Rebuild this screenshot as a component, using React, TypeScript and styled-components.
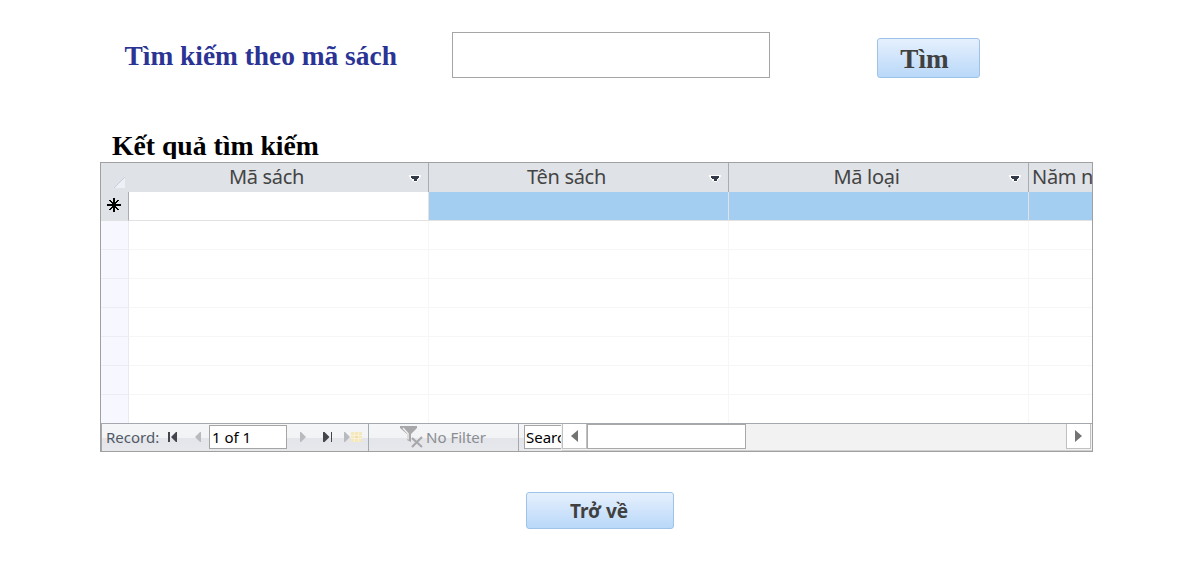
import React from "react";
import styled, { createGlobalStyle } from "styled-components";

const GlobalStyle = createGlobalStyle`
  *, *::before, *::after { box-sizing: border-box; }
  body { margin: 0; background: #fff; overflow: hidden; }
  input, button { margin: 0; padding: 0; border-radius: 0; outline: none; }
`;

const Page = styled.main`
  width: 1195px;
  height: 568px;
  padding: 32px 102px 0 100px;
  display: flex;
  flex-direction: column;
  background: #fff;
  font-family: "Noto Sans", "Open Sans", sans-serif;
`;

const SearchBar = styled.form`
  display: flex;
  align-items: flex-start;
  height: 95px;
`;

const SearchLabel = styled.label`
  width: 352px;
  padding: 8px 0 0 24.5px;
  font: bold 27.4px/32px "Liberation Serif", serif;
  color: #2b3494;
  white-space: nowrap;
`;

const SearchInput = styled.input`
  width: 318px;
  height: 46px;
  border: 1px solid #a5a5a5;
  background: #fff;
`;

const FormButton = styled.button<{ $width: number; $height: number }>`
  width: ${(p) => p.$width}px;
  height: ${(p) => p.$height}px;
  border: 1px solid #9dc3e9;
  border-radius: 3px;
  background: linear-gradient(#e6f0fd, #b9d8f9);
  color: #404040;
  white-space: nowrap;
`;

const FindButton = styled(FormButton)`
  margin: 6px 0 0 107px;
  padding: 2px 8px 0 0;
  font: bold 27.2px/34px "Liberation Serif", serif;
`;

const BackButton = styled(FormButton)`
  align-self: center;
  margin: 40px 0 0 7px;
  padding-right: 2px;
  font: bold 19px/34px "Noto Sans", sans-serif;
`;

const ResultTitle = styled.h2`
  margin: 0 0 3px;
  padding: 3px 0 0 12px;
  height: 32px;
  overflow: hidden;
  font: bold 27.7px/32px "Liberation Serif", serif;
  color: #000;
`;

const Datasheet = styled.section`
  width: 993px;
  height: 290px;
  border: 1px solid #a0a0a0;
  overflow: hidden;
`;

const GridRow = styled.div`
  display: grid;
  grid-template-columns: 28px 300px 300px 300px 64px;
  height: 29px;
`;

const HeaderRow = styled(GridRow)`
  background: #dfe2e7;
`;

const Corner = styled.div`
  display: flex;
  align-items: flex-end;
  justify-content: flex-end;
  padding: 0 4px 4px 0;
`;

const HeaderCell = styled.div<{ $last?: boolean }>`
  display: flex;
  align-items: center;
  border-right: ${(p) => (p.$last ? "0" : "1px solid #a9adb3")};
  padding: ${(p) => (p.$last ? "0 0 0 3px" : "0 6px 0 0")};
  overflow: hidden;
  font-size: 20px;
  line-height: 28px;
  letter-spacing: -0.3px;
  color: #444;
  white-space: nowrap;
`;

const HeaderText = styled.span`
  flex: 1;
  padding: 0 5px 1px 0;
  text-align: center;
`;

const LastHeaderText = styled.span`
  padding-bottom: 1px;
`;

const RowSelector = styled.div<{ $active?: boolean }>`
  display: flex;
  align-items: center;
  justify-content: center;
  padding: 0 1px 2px 0;
  border-right: 1px solid ${(p) => (p.$active ? "#a9adb3" : "#e9e9ee")};
  border-bottom: 1px solid ${(p) => (p.$active ? "#e2e2e2" : "#ececf3")};
  background: ${(p) => (p.$active ? "#dfe2e7" : "#f6f7ff")};
`;

const Cell = styled.div<{ $active?: boolean; $selected?: boolean }>`
  border-right: 1px solid ${(p) => (p.$active ? "#e2e2e2" : "#f6f6f6")};
  border-bottom: 1px solid ${(p) => (p.$active ? "#e2e2e2" : "#f6f6f6")};
  background: ${(p) => (p.$selected ? "#a4cef1" : "#fff")};
`;

const GridBody = styled.div`
  height: 231px;
  overflow: hidden;
`;

const Footer = styled.footer`
  display: flex;
  height: 28px;
  border-top: 1px solid #a5a8ae;
  border-left: 1px solid #a5a8ae;
  background: linear-gradient(#f5f6f8 0, #f1f3f5 14px, #e4e5ea 14px, #e7e8ec 100%);
  font-size: 15px;
  line-height: 26px;
  color: #505a66;
  white-space: nowrap;
`;

const RecordNav = styled.div`
  display: flex;
  align-items: center;
  width: 267px;
  padding-left: 4px;
  border-right: 1px solid #a5a8ae;
`;

const RecordLabel = styled.span`
  width: 61px;
  padding-bottom: 2px;
`;

const NavIcon = styled.svg<{ $width: number }>`
  display: block;
  flex: none;
  width: ${(p) => p.$width}px;
  height: 27px;
`;

const FooterInput = styled.input<{ $width: number; $open?: boolean }>`
  width: ${(p) => p.$width}px;
  height: 24px;
  margin-bottom: 1px;
  padding: 0 0 1px ${(p) => (p.$open ? 1 : 2)}px;
  border: 1px solid #a5a5a5;
  border-right-width: ${(p) => (p.$open ? 0 : 1)}px;
  background: #fff;
  color: #000;
  font: 15px/20px "Noto Sans", sans-serif;
`;

const FilterState = styled.div`
  display: flex;
  align-items: center;
  width: 150px;
  padding-left: 31px;
  border-right: 1px solid #a5a8ae;
  color: #8b8d90;
`;

const FilterText = styled.span`
  padding-bottom: 2px;
`;

const SearchSlot = styled.div`
  display: flex;
  align-items: center;
  width: 43px;
  padding-left: 5px;
`;

const ScrollBar = styled.div`
  display: flex;
  flex: 1;
  height: 27px;
  padding-right: 1px;
  border-bottom: 1px solid #d0d0d0;
  background: #f2f2f2;
`;

const ScrollArrow = styled.div`
  display: flex;
  align-items: center;
  justify-content: center;
  width: 25px;
  height: 25px;
  border: 1px solid #c1c1c1;
  border-top: 0;
  background: #fff;
`;

const ScrollTrack = styled.div`
  flex: 1;
`;

const ScrollThumb = styled.div`
  width: 159px;
  height: 25px;
  border: 1px solid #a8a8a8;
  background: #fff;
`;

const DropArrow = () => (
  <svg width="13" height="9" viewBox="0 -2 13 9" shapeRendering="crispEdges">
    <path d="M0 0H12V2H11V4H9V6H8V7H5V6H3V4H1V2H0Z" fill="#fff" />
    <path d="M2 1H10V3H9V4H8V6H5V4H3V3H2Z" fill="#333b49" />
  </svg>
);

const columns = ["Mã sách", "Tên sách", "Mã loại"];
const emptyRows = 7;

const SearchForm = () => (
  <SearchBar onSubmit={(e) => e.preventDefault()}>
    <SearchLabel htmlFor="book-code">Tìm kiếm theo mã sách</SearchLabel>
    <SearchInput id="book-code" />
    <FindButton $width={103} $height={40}>Tìm</FindButton>
  </SearchBar>
);

const RecordBar = () => (
  <Footer>
    <RecordNav>
      <RecordLabel>Record:</RecordLabel>
      <NavIcon $width={42} viewBox="0 0 42 27" fill="#45464d">
        <path d="M1 8h2v10H1zM4 13l5-5h1v10h-1z" />
        <path d="M28 13l5-5h1v10h-1z" fill="#b8babe" />
      </NavIcon>
      <FooterInput $width={78} aria-label="Current record" defaultValue="1 of 1" />
      <NavIcon $width={81} viewBox="0 0 81 27">
        <path d="M13 8h1l5 5-5 5h-1z" fill="#b8babe" />
        <path d="M36 8h1.500l5 5-5 5H36zM44 8h1v10h-1z" fill="#45464d" />
        <path d="M57 8h1l5 5-5 5h-1z" fill="#b8babe" />
        <path d="M64 8h11v10H64z" fill="#f4e8bd" />
        <path d="M64 11.500h11M64 14.500h11M67.500 8v10M71.500 8v10" stroke="#f8f1d8" />
        <path d="M68 12h3v2h-3z" fill="#eee0aa" />
      </NavIcon>
    </RecordNav>
    <FilterState>
      <NavIcon $width={26} viewBox="0 0 26 27">
        <path d="M0 2h17v2l-6 6v8l-4-2v-6L0 4z" fill="#a8a8aa" />
        <path d="M3 4l5 5.500v6" stroke="#eee" strokeWidth="1.500" fill="none" />
        <path d="M12 14l10 9M22 13l-10 10" stroke="#a8a8aa" strokeWidth="2.200" fill="none" />
      </NavIcon>
      <FilterText>No Filter</FilterText>
    </FilterState>
    <SearchSlot>
      <FooterInput $width={37} $open aria-label="Search records" defaultValue="Search" />
    </SearchSlot>
    <ScrollBar>
      <ScrollArrow>
        <svg width="7" height="12"><path d="M7 0v12L0 6z" fill="#737373" /></svg>
      </ScrollArrow>
      <ScrollTrack><ScrollThumb /></ScrollTrack>
      <ScrollArrow>
        <svg width="7" height="12"><path d="M0 0v12l7-6z" fill="#737373" /></svg>
      </ScrollArrow>
    </ScrollBar>
  </Footer>
);

export default function App() {
  return (
    <Page>
      <GlobalStyle />
      <SearchForm />
      <ResultTitle>Kết quả tìm kiếm</ResultTitle>
      <Datasheet>
        <HeaderRow>
          <Corner>
            <svg width="11" height="11">
              <path d="M11 0v11H0z" fill="#edf0f4" />
              <path d="M0 11L11 0" stroke="#c3cddd" />
            </svg>
          </Corner>
          {columns.map((name) => (
            <HeaderCell key={name}>
              <HeaderText>{name}</HeaderText>
              <DropArrow />
            </HeaderCell>
          ))}
          <HeaderCell $last>
            <LastHeaderText>Năm nhập</LastHeaderText>
          </HeaderCell>
        </HeaderRow>
        <GridBody>
          <GridRow>
            <RowSelector $active>
              <svg width="14" height="14" viewBox="0 0 14 14" shapeRendering="crispEdges">
                <path d="M6 0h2v14H6zM0 6h14v2H0z" />
                <path d="M2 2h2v1h1v1h1v2H5V5H4V4H3V3H2zM12 2h-2v1H9v1H8v2h1V5h1V4h1V3h1zM2 12h2v-1h1v-1h1V8H5v1H4v1H3v1H2zM12 12h-2v-1H9v-1H8V8h1v1h1v1h1v1h1z" />
              </svg>
            </RowSelector>
            <Cell $active />
            <Cell $active $selected />
            <Cell $active $selected />
            <Cell $active $selected />
          </GridRow>
          {Array.from({ length: emptyRows }, (_, row) => (
            <GridRow key={row}>
              <RowSelector />
              <Cell />
              <Cell />
              <Cell />
              <Cell />
            </GridRow>
          ))}
        </GridBody>
        <RecordBar />
      </Datasheet>
      <BackButton $width={148} $height={37}>Trở về</BackButton>
    </Page>
  );
}
